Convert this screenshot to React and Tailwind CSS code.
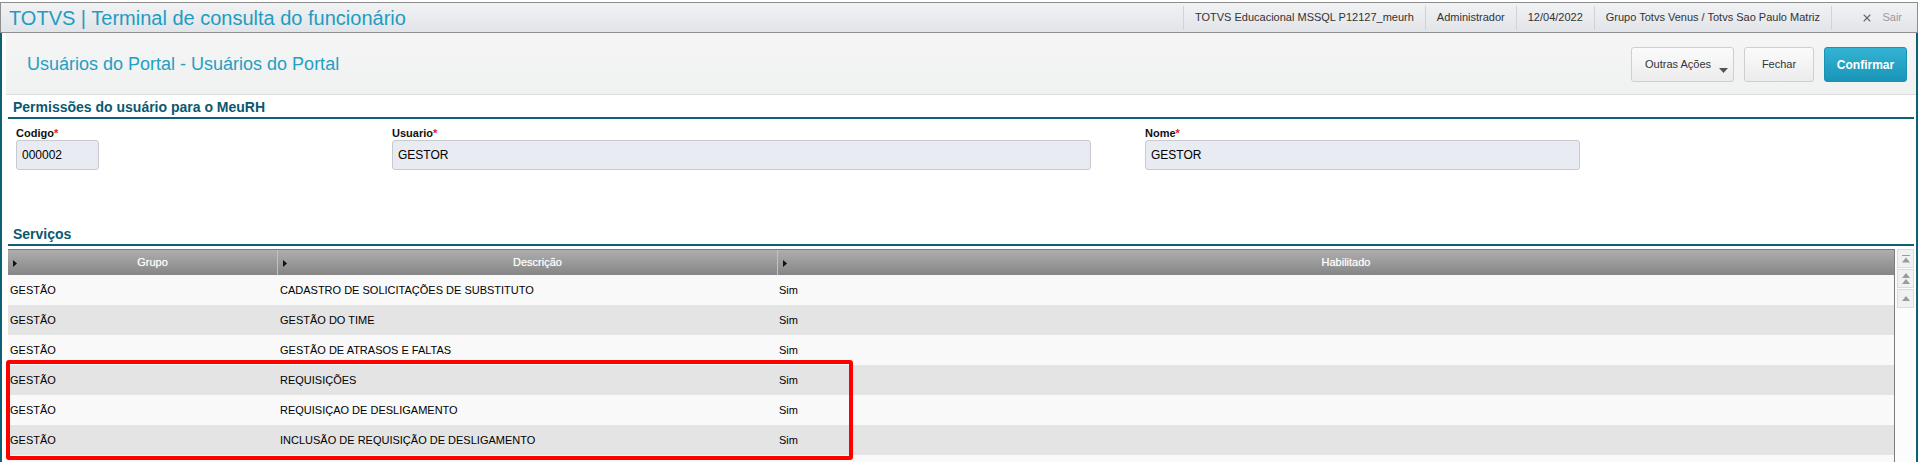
import { X } from "lucide-react"

const topItems = [
  "TOTVS Educacional MSSQL P12127_meurh",
  "Administrador",
  "12/04/2022",
  "Grupo Totvs Venus / Totvs Sao Paulo Matriz",
]

const rows = [
  ["GESTÃO", "CADASTRO DE SOLICITAÇÕES DE SUBSTITUTO", "Sim"],
  ["GESTÃO", "GESTÃO DO TIME", "Sim"],
  ["GESTÃO", "GESTÃO DE ATRASOS E FALTAS", "Sim"],
  ["GESTÃO", "REQUISIÇÕES", "Sim"],
  ["GESTÃO", "REQUISIÇAO DE DESLIGAMENTO", "Sim"],
  ["GESTÃO", "INCLUSÃO DE REQUISIÇÃO DE DESLIGAMENTO", "Sim"],
  ["", "", ""],
]

const Caret = () => (
  <svg width="4" height="7" viewBox="0 0 4 7" className="absolute left-[5px] top-[10px]">
    <polygon points="0,0 4,3.5 0,7" fill="#111" />
  </svg>
)

const Field = ({ label, value, inputClass }) => (
  <div className="flex flex-col">
    <div className="h-[14px] text-[11px] leading-[14px] font-bold text-[#111]">
      {label}
      <span className="text-[#e32222]">*</span>
    </div>
    <div
      className={`h-[30px] flex items-center px-[5px] bg-[#e8ebf1] border border-[#c8cacd] rounded-[3px] text-[12px] text-black ${inputClass}`}
    >
      {value}
    </div>
  </div>
)

const SectionTitle = ({ children, className }) => (
  <div className={`pl-[5px] pb-[1px] border-b-2 border-[#0e6175] ${className}`}>
    <span className="block text-[14px] leading-[18px] font-bold text-[#0b5870]">{children}</span>
  </div>
)

export default function App() {
  return (
    <div className="relative h-[462px] w-[1918px] overflow-hidden bg-white font-['Liberation_Sans',Arial,sans-serif]">
      {/* top bar */}
      <div className="mt-[2px] h-[31px] flex items-center border border-[#8e8e8e] bg-gradient-to-b from-[#f1f2f4] to-[#e1e4e8]">
        <div className="pl-[8px] text-[20px] leading-[24px] text-[#1e9cc2] flex-1">
          TOTVS | Terminal de consulta do funcionário
        </div>
        <div className="flex items-center h-full">
          {topItems.map((t) => (
            <div key={t} className="flex items-center h-[24px] px-[11px] border-l border-[#cfd3d7] text-[11px] text-[#333]">
              {t}
            </div>
          ))}
          <div className="flex items-center justify-end gap-[9px] h-[24px] w-[86px] pr-[15px] border-l border-[#cfd3d7] text-[11px] text-[#9a9a9a]">
            <X size={12} strokeWidth={2.2} className="text-[#666]" />
            Sair
          </div>
        </div>
      </div>

      {/* frame */}
      <div className="border-l-2 border-r-2 border-[#0e6175] h-[429px]">
        {/* sub header */}
        <div className="ml-[4px] h-[62px] flex items-center justify-between border-b border-[#dcdcdc] bg-gradient-to-b from-[#f4f5f4] to-[#f0f1f1]">
          <div className="pl-[21px] text-[18px] leading-[22px] text-[#22a0c4]">
            Usuários do Portal - Usuários do Portal
          </div>
          <div className="flex items-center gap-[10px] pr-[9px] pt-[2px]">
            <button className="relative w-[103px] h-[35px] pl-[13px] text-left rounded-[3px] border border-[#cfcfcf] bg-gradient-to-b from-[#fbfbfb] to-[#ececec] text-[11px] text-[#333]">
              Outras Ações
              <svg width="9" height="5" viewBox="0 0 9 5" className="absolute right-[5px] bottom-[8px]">
                <polygon points="0,0 9,0 4.5,5" fill="#555" />
              </svg>
            </button>
            <button className="w-[70px] h-[35px] rounded-[3px] border border-[#cfcfcf] bg-gradient-to-b from-[#fbfbfb] to-[#ececec] text-[11px] text-[#333]">
              Fechar
            </button>
            <button className="w-[83px] h-[35px] rounded-[3px] border border-[#1b92b3] bg-gradient-to-b from-[#33b3d3] to-[#1895b7] text-[12px] font-bold text-white">
              Confirmar
            </button>
          </div>
        </div>

        {/* content */}
        <div className="pl-[6px] pr-[2px]">
          <SectionTitle className="mt-[3px]">Permissões do usuário para o MeuRH</SectionTitle>

          <div className="mt-[7px] pl-[8px] grid grid-cols-[376px_753px_1fr]">
            <Field label="Codigo" value="000002" inputClass="w-[83px] text-[11px]" />
            <Field label="Usuario" value="GESTOR" inputClass="w-[699px]" />
            <Field label="Nome" value="GESTOR" inputClass="w-[435px]" />
          </div>

          <SectionTitle className="mt-[55px]">Serviços</SectionTitle>

          {/* grid */}
          <div className="mt-[3px] flex">
            <div className="flex-1 border-r border-[#7d7d7d]">
              <div className="flex h-[26px] border-t border-[#7a7a7a] bg-gradient-to-b from-[#aeaeae] to-[#868686] text-[11px] text-white [text-shadow:0_0_1px_rgba(255,255,255,0.6)]">
                <div className="relative w-[269px] flex items-center justify-center pl-[20px]">
                  <Caret />
                  Grupo
                </div>
                <div className="relative w-[500px] flex items-center justify-center pl-[20px] border-l border-[#c2c2c2]">
                  <Caret />
                  Descrição
                </div>
                <div className="relative flex-1 flex items-center justify-center pl-[20px] border-l border-[#c2c2c2]">
                  <Caret />
                  Habilitado
                </div>
              </div>
              {rows.map((r, i) => (
                <div
                  key={i}
                  className={`flex items-center h-[30px] text-[11px] text-black ${i % 2 === 0 ? "bg-[#f9f9f9]" : "bg-[#e4e4e4]"}`}
                >
                  <div className="w-[269px] pl-[2px]">{r[0]}</div>
                  <div className="w-[500px] pl-[3px]">{r[1]}</div>
                  <div className="flex-1 pl-[2px]">{r[2]}</div>
                </div>
              ))}
            </div>

            {/* scrollbar */}
            <div className="w-[19px] pl-[2px] flex flex-col bg-[#fbfcfd]">
              <div className="h-[19px] flex items-center justify-center border border-[#dadcdf] bg-[#eff1f3]">
                <svg width="8" height="8" viewBox="0 0 8 8">
                  <rect x="0" y="0" width="8" height="1" fill="#9b9b9b" />
                  <polygon points="4,2.5 8,7.5 0,7.5" fill="#9b9b9b" />
                </svg>
              </div>
              <div className="mt-[1px] h-[19px] flex items-center justify-center border border-[#dadcdf] bg-[#eff1f3]">
                <svg width="8" height="11" viewBox="0 0 8 11">
                  <polygon points="4,0 8,5 0,5" fill="#9b9b9b" />
                  <polygon points="4,6 8,11 0,11" fill="#9b9b9b" />
                </svg>
              </div>
              <div className="mt-[1px] h-[19px] flex items-center justify-center border border-[#dadcdf] bg-[#eff1f3]">
                <svg width="8" height="5" viewBox="0 0 8 5">
                  <polygon points="4,0 8,5 0,5" fill="#9b9b9b" />
                </svg>
              </div>
            </div>
          </div>
        </div>
      </div>

      {/* annotation */}
      <div className="absolute left-[6px] top-[360px] w-[847px] h-[100px] border-4 border-[#ff0000] rounded-[3px] pointer-events-none" />
    </div>
  )
}
